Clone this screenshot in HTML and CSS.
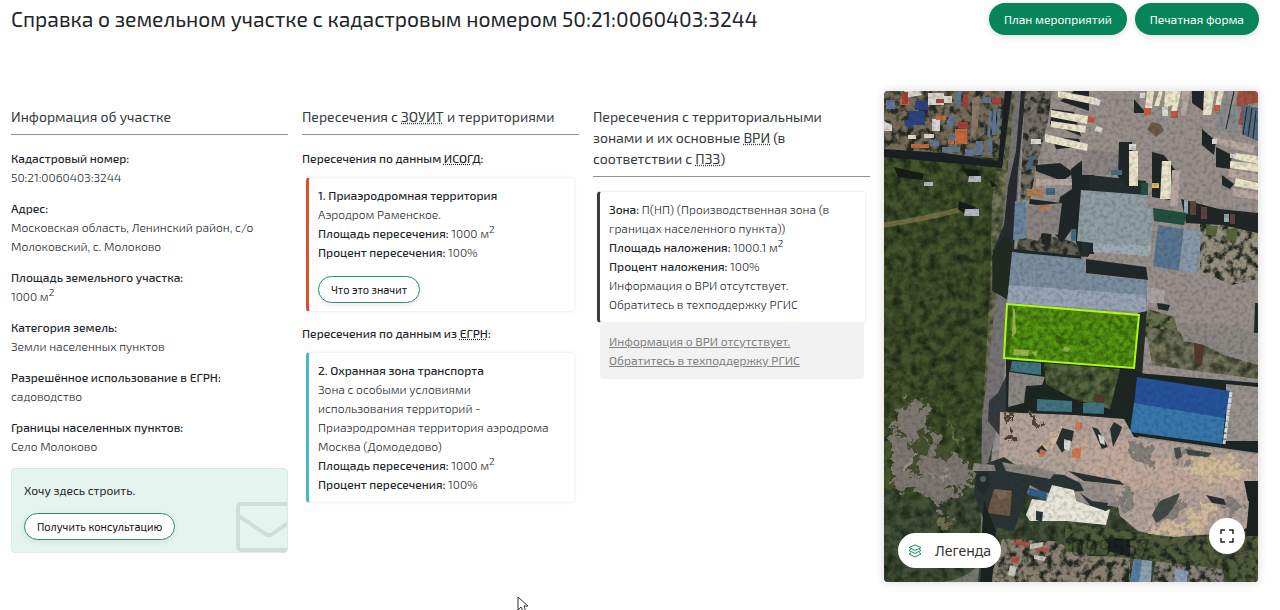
FILE: index.html
```
<!DOCTYPE html>
<html lang="ru">
  <head>
    <meta charset="utf-8">
    <meta name="viewport" content="width=device-width, initial-scale=1">
    <title>Справка о земельном участке</title>
    <link rel="stylesheet" href="styles.css">
  </head>
  <body>
    <header class="page-header">
      <h1>Справка о земельном участке с кадастровым номером 50:21:0060403:3244</h1>
      <div class="header-actions">
        <button class="btn btn-green">План мероприятий</button>
        <button class="btn btn-green">Печатная форма</button>
      </div>
    </header>

    <main class="columns">
      <section class="column">
        <h2>Информация об участке</h2>
        <dl class="info">
          <div>
            <dt>Кадастровый номер:</dt>
            <dd>50:21:0060403:3244</dd>
          </div>
          <div>
            <dt>Адрес:</dt>
            <dd>Московская область, Ленинский район, с/о Молоковский, с. Молоково</dd>
          </div>
          <div>
            <dt>Площадь земельного участка:</dt>
            <dd>1000 м<sup>2</sup></dd>
          </div>
          <div>
            <dt>Категория земель:</dt>
            <dd>Земли населенных пунктов</dd>
          </div>
          <div>
            <dt>Разрешённое использование в ЕГРН:</dt>
            <dd>садоводство</dd>
          </div>
          <div>
            <dt>Границы населенных пунктов:</dt>
            <dd>Село Молоково</dd>
          </div>
        </dl>
        <div class="build">
          <p>Хочу здесь строить.</p>
          <button class="btn btn-outline">Получить консультацию</button>
          <svg class="envelope" viewBox="0 0 51 50" fill="none" stroke="currentColor" stroke-width="4">
            <rect x="2" y="2" width="62" height="46" rx="3" />
            <path d="M3 14L28 31Q33 35 38 31L64 12" />
          </svg>
        </div>
      </section>

      <section class="column">
        <h2>Пересечения с <abbr title="Зоны с особыми условиями использования территории">ЗОУИТ</abbr> и территориями</h2>
        <h3>Пересечения по данным <abbr title="Информационная система обеспечения градостроительной деятельности">ИСОГД</abbr>:</h3>
        <div class="card card-red">
          <b>1. Приаэродромная территория</b>
          <p>Аэродром Раменское.</p>
          <p><b>Площадь пересечения:</b> 1000 м<sup>2</sup></p>
          <p><b>Процент пересечения:</b> 100%</p>
          <button class="btn btn-outline">Что это значит</button>
        </div>
        <h3>Пересечения по данным из <abbr title="Единый государственный реестр недвижимости">ЕГРН</abbr>:</h3>
        <div class="card card-blue">
          <b>2. Охранная зона транспорта</b>
          <p>Зона с особыми условиями использования территорий - Приаэродромная территория аэродрома Москва (Домодедово)</p>
          <p><b>Площадь пересечения:</b> 1000 м<sup>2</sup></p>
          <p><b>Процент пересечения:</b> 100%</p>
        </div>
      </section>

      <section class="column">
        <h2>Пересечения с территориальными зонами и их основные <abbr title="Виды разрешённого использования">ВРИ</abbr> (в соответствии с <abbr title="Правила землепользования и застройки">ПЗЗ</abbr>)</h2>
        <div class="card card-dark">
          <p><b>Зона:</b> П(НП) (Производственная зона (в границах населенного пункта))</p>
          <p><b>Площадь наложения:</b> 1000.1 м<sup>2</sup></p>
          <p><b>Процент наложения:</b> 100%</p>
          <p>Информация о ВРИ отсутствует.<br>Обратитесь в техподдержку РГИС</p>
        </div>
        <div class="note">
          <a href="#">Информация о ВРИ отсутствует.<br>Обратитесь в техподдержку РГИС</a>
        </div>
      </section>

      <section class="map">
        <svg class="map-image" viewBox="0 0 374 491" preserveAspectRatio="xMidYMid slice">
          <defs>
            <filter id="grass" x="0" y="0" width="100%" height="100%" color-interpolation-filters="sRGB">
              <feTurbulence type="fractalNoise" baseFrequency="0.11" numOctaves="5" seed="4" />
              <feColorMatrix values="0 0 0 0 0.06  0 0 0 0 0.1  0 0 0 0 0.05  1.6 0 0 0 -0.55" />
              <feComposite in2="SourceGraphic" operator="in" result="n" />
              <feMerge><feMergeNode in="SourceGraphic" /><feMergeNode in="n" /></feMerge>
            </filter>
            <filter id="lawn" x="0" y="0" width="100%" height="100%" color-interpolation-filters="sRGB">
              <feTurbulence type="fractalNoise" baseFrequency="0.2" numOctaves="4" seed="7" />
              <feColorMatrix values="0 0 0 0 0.16  0 0 0 0 0.3  0 0 0 0 0.04  1.6 0 0 0 -0.5" />
              <feComposite in2="SourceGraphic" operator="in" result="n" />
              <feMerge><feMergeNode in="SourceGraphic" /><feMergeNode in="n" /></feMerge>
            </filter>
            <filter id="rubble" x="0" y="0" width="100%" height="100%" color-interpolation-filters="sRGB">
              <feTurbulence type="fractalNoise" baseFrequency="0.13" numOctaves="4" seed="9" />
              <feColorMatrix values="0 0 0 0 0.13  0 0 0 0 0.16  0 0 0 0 0.12  4 0 0 0 -1.8" />
              <feComposite in2="SourceGraphic" operator="in" result="n" />
              <feMerge><feMergeNode in="SourceGraphic" /><feMergeNode in="n" /></feMerge>
            </filter>
            <filter id="patch" x="-10%" y="-10%" width="120%" height="120%" color-interpolation-filters="sRGB">
              <feTurbulence type="fractalNoise" baseFrequency="0.1" numOctaves="4" seed="2" />
              <feDisplacementMap in="SourceGraphic" scale="26" xChannelSelector="R" yChannelSelector="G" />
            </filter>
            <filter id="grain" x="0" y="0" width="100%" height="100%" color-interpolation-filters="sRGB">
              <feTurbulence type="fractalNoise" baseFrequency="0.25" numOctaves="3" seed="5" />
              <feColorMatrix values="0 0 0 0 0.1  0 0 0 0 0.12  0 0 0 0 0.12  0.5 0 0 0 -0.2" />
            </filter>
          </defs>

          <!-- ground -->
          <rect width="374" height="491" fill="#978f8a" />
          <g filter="url(#grass)">
            <path fill="#46562c" d="M0 60H128L116 280 104 400 110 491H0z" />
            <path fill="#757856" d="M121 0H134L124 110 117 215 108 340 98 330 106 200 108 110 112 80H118z" />
            <path fill="#46533a" d="M0 400L40 410 105 392 180 412 300 420 374 420V491H0z" />
          </g>
          <path fill="none" stroke="#87794f" stroke-width="5" opacity=".7" d="M0 134Q40 128 75 119" />

          <!-- bare soil on the left -->
          <g filter="url(#patch)">
            <path fill="#7d776f" d="M8 338L20 314 36 306 44 322 46 344 58 354 74 366 90 380 88 396 64 402 56 420 44 408 36 398 22 402 6 388V362z" />
            <path fill="#454f2e" d="M30 350L38 336 48 342 42 362 34 376 26 386 28 366zM52 352L66 358 62 370 50 366zM10 340L18 336 14 350z" />
            <path fill="#958f86" d="M16 376L28 362 24 386zM50 384L64 378 60 392z" />
            <path fill="#6f6d4f" d="M56 428L68 424 70 436 58 440zM60 330L74 342 84 356 74 350z" />
          </g>

          <!-- container yard, top left -->
          <g filter="url(#rubble)">
            <path fill="#776b59" d="M0 0H121V68L0 58z" />
          </g>
          <path fill="#191f23" d="M0 58L60 62 114 70 121 0H128L118 77 78 73 0 66z" />
          <path fill="#2c4181" d="M24 20H41V34H26zM31 10H44V19H31zM20 29L28 28 30 37 21 35z" />
          <path fill="#d8d5cf" d="M44 2H60V14H44zM20 0L36 0 38 4 22 7zM48 28H56V40H48zM60 5H68V12H60zM40 43H50V47H40zM0 30L8 34V40H0zM24 44H32V48H24z" />
          <path fill="#c9683f" d="M71 38H83V53H71zM27 53H45V57H27zM52 25H62V29H52zM16 8H25V14H16zM64 49H70V53H64z" />
          <path fill="#a8403a" d="M74 31H84V37H74zM79 3H84V17H79zM18 1H24V13H18zM108 7H117V13H108zM52 8H60V12H52z" />
          <path fill="#5d7691" d="M62 31L68 22 72 25 66 40zM72 1L78 1 76 15 71 15zM99 6H107V12H99zM66 43H71V50H66zM92 50H99V64H90zM105 20L108 20 106 46 103 46zM109 18H112V44H108zM114 18H117L115 42H112zM104 49H108V64H104zM81 58H90V64H81zM58 56H76V61H58zM2 9H11V18H2zM46 50H55V55H46z" />
          <path fill="#8a7965" d="M88 8L96 4 94 36 86 50 88 26z" />

          <!-- sheds in the grass -->
          <path fill="#171c12" d="M10 76L40 83 38 89 14 86zM77 77L94 79 97 86 86 88zM75 110L92 116 82 124 74 118zM105 88L113 95 108 96z" />
          <path fill="#b8b7c0" d="M85 85H97V91H84zM81 118H95V125H80zM40 91H49V95H40z" />

          <!-- road -->
          <path fill="#777374" d="M131 0H141L127 210 116 326 104 372 106 491H96L98 330 112 205z" />
          <path fill="#252b30" d="M137 0H142L134 80 131 130 128 210 108 200 109 160 120 134 124 95 132 60z" />
          <path fill="#22291f" d="M108 165L122 142 128 155 125 210 110 200z" />
          <path fill="#33393c" d="M105 310L114 302 122 285 126 245 128 268 122 320 116 345 104 330z" />

          <!-- parking yard, left clutter -->
          <g filter="url(#rubble)">
            <path fill="#757068" d="M141 0H168L164 30 152 78 146 108 136 110z" />
            <path fill="#666055" d="M134 148L166 145 205 155 204 166 132 160z" />
          </g>
          <path fill="#202528" d="M168 18L190 21 197 45 166 33zM190 0H205V20L176 10zM168 46L195 48 198 56 172 58zM152 74L176 72 190 82 178 90 152 80zM187 78L210 60V163H196L188 138 178 152 170 142 176 106 188 98zM146 108L178 112 180 117 145 113zM156 140H168L166 155 158 153z" />
          <path fill="#8a8382" d="M143 115L178 112 174 144 158 142 154 150 142 147zM198 58L236 62 236 84 198 84z" />
          <path fill="#252c2d" d="M205 84L262 90 262 120 198 120V165H205z" />

          <!-- trucks -->
          <path fill="#202627" d="M308 0H322V22L308 12zM235 51L248 51 250 95 246 97 234 86zM268 61L280 64 292 80V110L268 106zM250 8L262 22 250 22zM318 38L332 50 330 64 318 54zM332 56L348 64 346 78 332 76zM338 84L350 93 346 98 338 94z" />
          <path fill="#ebe5ca" d="M174 0L213 7 212 14 174 6zM167 19L204 25 203 33 167 26zM167 30L202 35 201 42 167 36zM161 43L204 53 203 60 161 51zM245 60H254V95H245zM278 70H287V108H276zM263 0H270L268 17H261zM275 0H279L275 15H270zM281 0H297L293 20H287L289 14 280 17zM320 0H331L327 24H319zM334 0H340L336 16H331zM352 62L374 65V73L350 68zM346 70L374 73V81L346 77zM352 87L374 92V99L350 95z" />
          <path fill="#b8a6a0" d="M330 46L371 54 369 62 328 52zM345 78L374 83V90L344 86zM349 97L374 101V109L348 105zM152 88L188 88V94L152 95zM288 79H296L294 115H286zM298 0H306L302 25H297z" />
          <path fill="#dadbd9" d="M210 7L217 9 215 15 209 13zM212 35L219 37 217 42 211 40zM245 53H252V59H245zM328 48H333V53H328zM346 63H351V67H346zM147 48H157V53H147zM278 16H284V25H278zM256 2H261V7H256z" />
          <path fill="#ca5543" d="M204 25L212 27 210 32 204 31zM260 17H267V24H260zM287 20H294V27H287zM330 14H336V20H330z" />
          <path fill="#6c5a43" d="M263 38L268 31 276 33 280 39 272 46z" />
          <path fill="#a0503f" d="M354 0H374V12L364 13 360 34 350 34z" />
          <path fill="#858a8c" d="M338 12L345 2 340 40 331 39zM348 14L358 16 352 44 340 40z" />
          <path fill="#536c83" d="M359 14L374 17V50L358 43z" />
          <path fill="none" stroke="#202528" stroke-width="1" d="M363 16L359 44M368 17L364 46M372 20L369 48M350 0L342 38" />
          <path fill="#b17b4d" d="M143 98H159V105H143zM155 114L167 115 163 120 155 118z" />
          <path fill="#456b83" d="M162 97H171V104H162zM227 79H238V84H227zM147 66L152 64 146 78 141 80zM187 138H192V150H187z" />
          <path fill="#dfbd61" d="M268 92H275V97H268z" />

          <!-- parked cars and stacks by the fence -->
          <g filter="url(#rubble)">
            <path fill="#98917f" d="M316 132L374 134V188L348 194 316 180z" />
            <path fill="#69724c" d="M264 218L290 226 296 250 280 252 260 246z" />
          </g>
          <path fill="#57633a" d="M322 135H334L332 146 322 143zM342 138L354 137 352 152 343 148z" />
          <path fill="#202626" d="M297 108L335 118 374 122V142L338 134 302 132z" />
          <path fill="#5d4340" d="M306 110H312V124H306zM317 116H323V128H317zM346 123H351V133H346z" />
          <path fill="#98a9ad" d="M300 109H304V123H300zM340 123H345V131H340z" />

          <!-- roofs -->
          <path fill="#6884a0" d="M131 110L142 111 142 147 129 149z" />
          <path fill="#8f9ea4" d="M197 99L263 104 262 117 269 119 266 165 209 161 209 152 193 150z" />
          <path fill="#9fabb3" d="M209 152L267 155 266 165 209 161z" />
          <path fill="#214f3f" d="M269 117L303 122 300 134 270 130zM257 92H264V104H257z" />
          <path fill="#5a7592" d="M274 134L300 138 295 180 269 175z" />
          <path fill="#8798ab" d="M300 138L318 141 313 182 295 180z" />
          <path fill="#202728" d="M202 168L262 176 264 189 202 182zM130 158L197 165 198 171 130 164z" />
          <path fill="#7b8d9f" d="M128 161L201 168V183L263 189 262 221 123 212z" />
          <path fill="#97a4b6" d="M125 194L262 204 262 221 123 212z" />
          <path fill="#a8a3a2" d="M263 196L281 199 280 212 263 212z" />
          <path fill="#202a27" d="M273 212L286 214 284 220 274 218zM371 212H374V242H370z" />

          <!-- yard south of the parcel -->
          <path fill="#242c28" d="M254 222L263 220 258 285 244 284z" />
          <path fill="#1c2521" d="M122 268L246 277 260 283 254 350 200 330 122 322z" />
          <g filter="url(#grass)">
            <path fill="#5a6a42" d="M160 272L236 278 226 318 190 308 162 293z" />
            <path fill="#77765e" d="M262 236L374 252V288L268 274z" />
          </g>
          <path fill="#8b8782" d="M125 281L161 286 158 294 142 295 140 312 124 316zM292 232L350 234 374 244V274L340 264 320 254 300 250z" />
          <path fill="#3f7480" d="M128 270L157 272V284L126 280zM153 308L188 310V321L153 320zM199 312H220V323L199 322z" />
          <path fill="#51392a" d="M310 252L320 254 318 274 311 272zM210 303L221 304 220 312 210 311z" />

          <!-- blue hangar -->
          <path fill="#1a2524" d="M253 282L374 292V362L246 344z" />
          <path fill="#98918d" d="M342 293L374 296V350L342 350z" />
          <path fill="#24539b" d="M253 286L346 300 341 327 250 314z" />
          <path fill="#3777ad" d="M250 312L341 327 338 353 246 341z" />
          <path fill="none" stroke="#d3dde0" stroke-width="3" stroke-dasharray="5 1" d="M347 301L340 353" />

          <!-- sand and gravel -->
          <path fill="#b3a298" d="M116 321L190 324 240 328 250 346 374 364V430L340 450 300 450 254 440 236 425 230 394 180 388 150 374 115 372z" />
          <g filter="url(#patch)">
            <path fill="#c1a89b" d="M190 350L240 350 300 378 366 384 352 404 240 396 190 374z" />
            <path fill="#d0ba99" d="M296 374L330 364 352 370 366 380 340 390 308 386zM306 424L325 410 332 420 322 440 296 440zM262 436L288 430 306 440 270 446zM150 366L170 342 182 336 166 362z" />
            <path fill="#85807a" d="M242 350L270 356 268 374 250 366zM290 357L326 362 316 368 292 366zM270 420L292 404 302 412 282 430zM236 400L250 404 244 424 236 418zM344 400L360 410 350 430 340 420z" />
            <path fill="#4f4238" d="M124 340L134 342 130 352 122 350zM146 324L156 326 154 334 146 332zM122 326L128 324 128 332z" />
          </g>
          <path fill="#28302f" d="M172 352L178 337 190 340 188 350 178 362zM208 336L214 338 224 356 218 358zM226 338L230 331 238 336 236 342 229 356zM184 380L236 390 240 394 200 390zM322 404L340 408 342 414 328 412zM152 360L158 354 163 360 157 364z" />
          <path fill="#434a47" d="M268 424L276 410 296 402 292 412 284 424 272 432zM290 357L296 356 298 366 292 368zM302 358L328 362 324 366 304 364z" />
          <path fill="#c97850" d="M188 358L198 356 196 368 188 366zM156 358L162 360 160 366 155 366zM192 330L199 332 197 340 191 338z" />
          <path fill="#d9dad3" d="M180 348L187 350 185 360 180 358zM214 343L220 346 221 354 216 352z" />

          <!-- houses below the road -->
          <path fill="#2a3334" d="M93 376L120 366 140 380 180 384 196 392 200 400 160 402 146 394 140 410 130 440 102 434 90 404z" />
          <path fill="#8a8680" d="M118 371L172 381 166 388 122 380zM90 372L110 374 112 380 88 380z" />
          <path fill="#6b5846" d="M110 398L128 400 126 425 103 422z" />
          <path fill="#7d6852" d="M110 398L128 400 116 410z" />
          <path fill="#335f88" d="M145 397L163 401 162 408 144 404z" />
          <path fill="#e9e7da" d="M168 394L190 399 192 410 222 420 226 418 222 434 182 430 146 430 142 424 148 408 162 410z" />
          <path fill="#2a3335" d="M152 420L159 421 158 431 152 429zM196 402L208 410 224 412 222 420 206 414z" />

          <!-- bottom rows -->
          <g filter="url(#rubble)">
            <path fill="#8c8374" d="M118 448L170 450 206 465 246 466V491H106z" />
            <path fill="#88827b" d="M272 470L340 478V491H268z" />
            <path fill="#525c3b" d="M182 430L240 440 290 446 374 440V491H350L340 478 270 470 180 460z" />
          </g>
          <path fill="#b1514b" d="M132 449L146 452 144 456 130 453zM150 455L166 457 164 461 152 460zM128 465L136 466 134 473 127 471z" />
          <path fill="#c9c6bc" d="M146 453L160 451 158 456 146 458zM126 474L133 476 130 486 124 484zM150 464L162 466 160 470 150 468z" />
          <path fill="#8da1b3" d="M250 468L268 470 267 491H246zM291 478L304 480 303 491H290z" />
          <path fill="#557c9f" d="M250 468L258 469 255 491H246z" />
          <path fill="#1a211e" d="M100 410L112 440 108 491H96L98 440zM225 446L246 449 246 466 224 460zM360 390H374V410H364zM366 400L374 402V445H362z" />
          <path fill="#77766f" d="M60 491Q88 486 96 470L94 491z" />

          <rect width="374" height="491" filter="url(#grain)" />

          <!-- faint watermark -->
          <path fill="#20282a" opacity=".7" d="M99 404C88 392 90 380 99 380S110 392 99 404z" />
          <circle cx="99" cy="388" r="3" fill="#68706f" opacity=".7" />
          <text class="map-mark" x="186" y="465">099557</text>

          <!-- parcel -->
          <path fill="#5a9a10" d="M123 213L255 224 250 277 120 267z" filter="url(#lawn)" />
          <path fill="#b6bf68" opacity=".7" d="M130 258L145 259 144 265 129 264zM148 261L153 260 152 266zM180 256L186 257 184 261 179 260zM129 218L131 218 132 242 128 246z" />
          <path fill="#2f5213" opacity=".6" d="M172 244L184 248 182 253 172 252zM195 250L204 248 202 256zM123 213L128 214 125 267 120 267z" />
          <path fill="none" stroke="#a8fb15" stroke-width="2" d="M123 213L255 224 250 277 120 267z" />
        </svg>

        <button class="legend">
          <svg viewBox="0 0 14 14" fill="none" stroke="#17895f" stroke-width="1">
            <path d="M7 1L13 3.5 7 6.5 1 3.5z" />
            <path d="M3 5L1 6.5 7 9.5 13 6.5 11 5M3 8.5L1 10 7 13 13 10 11 8.5" />
          </svg>
          Легенда
        </button>
        <button class="fullscreen" aria-label="На весь экран">
          <svg viewBox="0 0 14 14" fill="none" stroke="#222" stroke-width="1.5">
            <path d="M1 5V1H5M9 1H13V5M13 9V13H9M5 13H1V9" />
          </svg>
        </button>
      </section>
    </main>

    <svg class="cursor" viewBox="0 0 12 18">
      <path d="M1 1V14L4 11 7 17 9 16 7 10H11z" fill="#fff" stroke="#333" />
    </svg>
  </body>
</html>
```
FILE: styles.css
```
* {
  box-sizing: border-box;
}

body {
  margin: 0;
  min-height: 100vh;
  position: relative;
  overflow: hidden;
  background-color: #fefefe;
  color: #212529;
  font-family: "Exo 2", Roboto, "Open Sans", sans-serif;
  font-size: 12px;
  line-height: 19px;
}

h1,
h2,
h3,
p,
dl,
dd {
  margin: 0;
}

.page-header {
  display: flex;
  justify-content: space-between;
  align-items: flex-start;
  padding: 3px 21px 0 11px;
}

h1 {
  font-size: 21px;
  line-height: 32px;
  font-weight: 400;
}

.header-actions {
  display: flex;
  gap: 8px;
}

.btn {
  font-family: inherit;
  cursor: pointer;
  white-space: nowrap;
}

.btn-green {
  height: 32px;
  padding: 0 15px;
  border: 0;
  border-radius: 16px;
  background-color: #07845a;
  color: #fff;
  font-size: 12px;
  box-shadow: 0 2px 6px rgba(0, 0, 0, 0.12);
}

.btn-outline {
  height: 27px;
  padding: 0 12px;
  border: 1px solid #2b8e6a;
  border-radius: 14px;
  background-color: #fff;
  color: #111;
  font-size: 11px;
  box-shadow: 0 2px 6px rgba(0, 0, 0, 0.08);
}

.columns {
  display: grid;
  grid-template-columns: 277fr 277fr 277fr 374fr;
  gap: 14px;
  align-items: start;
  padding: 56px 22px 0 11px;
}

.column {
  min-width: 0;
  padding-top: 15px;
}

h2 {
  margin-bottom: 14px;
  padding-bottom: 7px;
  border-bottom: 1px solid #8f9294;
  font-size: 14px;
  line-height: 21px;
  font-weight: 400;
  color: #343a40;
}

h3 {
  margin-bottom: 9px;
  font-size: 12px;
  line-height: 19px;
  font-weight: 500;
}

abbr {
  text-decoration: underline dotted;
}

b,
dt {
  font-weight: 500;
}

dd,
.card p {
  font-weight: 300;
}

.card p b {
  font-weight: 500;
}

sup {
  font-size: 10px;
  line-height: 0;
}

.info > div {
  margin-bottom: 12px;
}

.build {
  position: relative;
  overflow: hidden;
  padding: 12px;
  border: 1px solid #d8ece4;
  border-radius: 4px;
  background-color: #e6f4ef;
}

.build p {
  margin-bottom: 13px;
}

.envelope {
  position: absolute;
  right: 0;
  bottom: 0;
  width: 51px;
  height: 50px;
  color: #cfdfd8;
}

.card {
  margin: 0 4px 12px;
  padding: 8px 18px 8px 9px;
  border: 1px solid #f3f3f3;
  border-left: 3px solid #444;
  border-radius: 4px;
  background-color: #fff;
  box-shadow: 0 0 3px rgba(0, 0, 0, 0.05);
}

.card .btn {
  display: block;
  margin-top: 14px;
}

.card-red {
  border-left-color: #d9502e;
}

.card-blue {
  border-left-color: #46b8c6;
}

.card-dark {
  margin-bottom: 0;
  border-left-color: #3c3c3f;
}

.note {
  margin: 0 6px 0 7px;
  padding: 9px;
  border-radius: 0 0 4px 4px;
  background-color: #f2f2f2;
}

.note a {
  color: #808080;
}

.map {
  position: relative;
  border-radius: 4px;
  overflow: hidden;
  aspect-ratio: 374 / 491;
  box-shadow: 0 0 10px rgba(0, 0, 0, 0.15);
}

.map-image {
  display: block;
  width: 100%;
  height: 100%;
}

.map-mark {
  font-size: 24px;
  fill: #0c100e;
  opacity: 0.4;
}

.legend {
  position: absolute;
  left: 14px;
  bottom: 14px;
  display: flex;
  align-items: center;
  gap: 13px;
  height: 35px;
  padding: 0 10px;
  border: 0;
  border-radius: 18px;
  background-color: #fff;
  color: #333;
  font-family: "Noto Sans", sans-serif;
  font-size: 14px;
}

.legend svg {
  width: 14px;
  height: 14px;
}

.fullscreen {
  position: absolute;
  right: 13px;
  bottom: 28px;
  width: 36px;
  height: 36px;
  padding: 11px;
  border: 0;
  border-radius: 50%;
  background-color: #fff;
}

.fullscreen svg {
  display: block;
  width: 14px;
  height: 14px;
}

.cursor {
  position: absolute;
  left: 517px;
  top: 596px;
  width: 12px;
  height: 18px;
}

@media (max-width: 900px) {
  body {
    overflow: auto;
  }

  .columns {
    grid-template-columns: 1fr;
  }
}
```
